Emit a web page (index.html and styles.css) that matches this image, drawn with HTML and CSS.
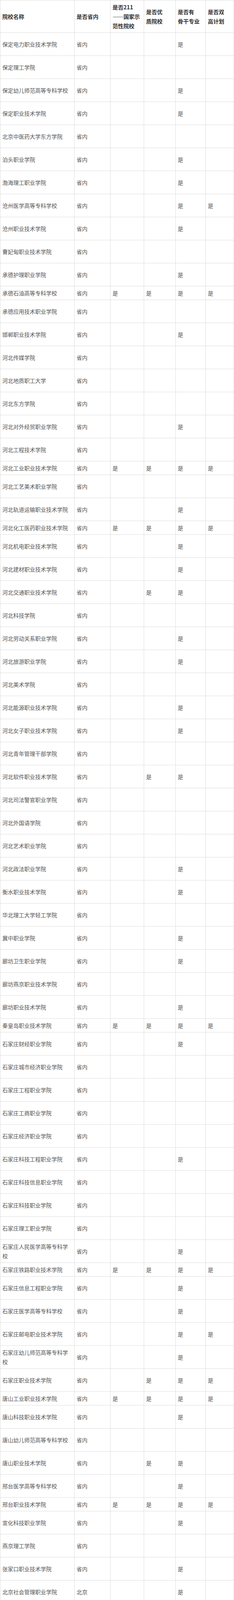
FILE: index.html
```html
<!DOCTYPE html>
<html lang="zh-CN">
<head>
<meta charset="utf-8">
<title>院校名单</title>
<link rel="stylesheet" href="styles.css">
</head>
<body>
<table class="schools">
<thead>
<tr><th class="c1">院校名称</th><th class="c2">是否省内</th><th class="c3">是否211<br>——国家示<br>范性院校</th><th class="c4">是否优<br>质院校</th><th class="c5">是否有<br>骨干专业</th><th class="c6">是否双<br>高计划</th></tr>
</thead>
<tbody>
<tr class="n"><td>保定电力职业技术学院</td><td>省内</td><td></td><td></td><td>是</td><td></td></tr>
<tr class="n"><td>保定理工学院</td><td>省内</td><td></td><td></td><td></td><td></td></tr>
<tr class="n"><td>保定幼儿师范高等专科学校</td><td>省内</td><td></td><td></td><td>是</td><td></td></tr>
<tr class="n"><td>保定职业技术学院</td><td>省内</td><td></td><td></td><td>是</td><td></td></tr>
<tr class="n"><td>北京中医药大学东方学院</td><td>省内</td><td></td><td></td><td></td><td></td></tr>
<tr class="n"><td>泊头职业学院</td><td>省内</td><td></td><td></td><td>是</td><td></td></tr>
<tr class="n"><td>渤海理工职业学院</td><td>省内</td><td></td><td></td><td>是</td><td></td></tr>
<tr class="n"><td>沧州医学高等专科学校</td><td>省内</td><td></td><td></td><td>是</td><td>是</td></tr>
<tr class="n"><td>沧州职业技术学院</td><td>省内</td><td></td><td></td><td>是</td><td></td></tr>
<tr class="n"><td>曹妃甸职业技术学院</td><td>省内</td><td></td><td></td><td></td><td></td></tr>
<tr class="n"><td>承德护理职业学院</td><td>省内</td><td></td><td></td><td>是</td><td></td></tr>
<tr><td>承德石油高等专科学校</td><td>省内</td><td>是</td><td>是</td><td>是</td><td>是</td></tr>
<tr class="n"><td>承德应用技术职业学院</td><td>省内</td><td></td><td></td><td></td><td></td></tr>
<tr class="n"><td>邯郸职业技术学院</td><td>省内</td><td></td><td></td><td>是</td><td></td></tr>
<tr class="n"><td>河北传媒学院</td><td>省内</td><td></td><td></td><td></td><td></td></tr>
<tr class="n"><td>河北地质职工大学</td><td>省内</td><td></td><td></td><td></td><td></td></tr>
<tr class="n"><td>河北东方学院</td><td>省内</td><td></td><td></td><td></td><td></td></tr>
<tr class="n"><td>河北对外经贸职业学院</td><td>省内</td><td></td><td></td><td>是</td><td></td></tr>
<tr class="n"><td>河北工程技术学院</td><td>省内</td><td></td><td></td><td></td><td></td></tr>
<tr><td>河北工业职业技术学院</td><td>省内</td><td>是</td><td>是</td><td>是</td><td>是</td></tr>
<tr class="n"><td>河北工艺美术职业学院</td><td>省内</td><td></td><td></td><td></td><td></td></tr>
<tr class="n"><td>河北轨道运输职业技术学院</td><td>省内</td><td></td><td></td><td>是</td><td></td></tr>
<tr><td>河北化工医药职业技术学院</td><td>省内</td><td>是</td><td>是</td><td>是</td><td>是</td></tr>
<tr class="n"><td>河北机电职业技术学院</td><td>省内</td><td></td><td></td><td>是</td><td></td></tr>
<tr class="n"><td>河北建材职业技术学院</td><td>省内</td><td></td><td></td><td>是</td><td></td></tr>
<tr class="n"><td>河北交通职业技术学院</td><td>省内</td><td></td><td>是</td><td>是</td><td></td></tr>
<tr class="n"><td>河北科技学院</td><td>省内</td><td></td><td></td><td></td><td></td></tr>
<tr class="n"><td>河北劳动关系职业学院</td><td>省内</td><td></td><td></td><td>是</td><td></td></tr>
<tr class="n"><td>河北旅游职业学院</td><td>省内</td><td></td><td></td><td>是</td><td></td></tr>
<tr class="n"><td>河北美术学院</td><td>省内</td><td></td><td></td><td></td><td></td></tr>
<tr class="n"><td>河北能源职业技术学院</td><td>省内</td><td></td><td></td><td>是</td><td></td></tr>
<tr class="n"><td>河北女子职业技术学院</td><td>省内</td><td></td><td></td><td>是</td><td></td></tr>
<tr class="n"><td>河北青年管理干部学院</td><td>省内</td><td></td><td></td><td></td><td></td></tr>
<tr class="n"><td>河北软件职业技术学院</td><td>省内</td><td></td><td>是</td><td>是</td><td></td></tr>
<tr class="n"><td>河北司法警官职业学院</td><td>省内</td><td></td><td></td><td></td><td></td></tr>
<tr class="n"><td>河北外国语学院</td><td>省内</td><td></td><td></td><td></td><td></td></tr>
<tr class="n"><td>河北艺术职业学院</td><td>省内</td><td></td><td></td><td></td><td></td></tr>
<tr class="n"><td>河北政法职业学院</td><td>省内</td><td></td><td></td><td>是</td><td></td></tr>
<tr class="n"><td>衡水职业技术学院</td><td>省内</td><td></td><td></td><td>是</td><td></td></tr>
<tr class="n"><td>华北理工大学轻工学院</td><td>省内</td><td></td><td></td><td></td><td></td></tr>
<tr class="n"><td>冀中职业学院</td><td>省内</td><td></td><td></td><td>是</td><td></td></tr>
<tr class="n"><td>廊坊卫生职业学院</td><td>省内</td><td></td><td></td><td>是</td><td></td></tr>
<tr class="n"><td>廊坊燕京职业技术学院</td><td>省内</td><td></td><td></td><td></td><td></td></tr>
<tr class="n"><td>廊坊职业技术学院</td><td>省内</td><td></td><td></td><td>是</td><td></td></tr>
<tr><td>秦皇岛职业技术学院</td><td>省内</td><td>是</td><td>是</td><td>是</td><td>是</td></tr>
<tr class="n"><td>石家庄财经职业学院</td><td>省内</td><td></td><td></td><td>是</td><td></td></tr>
<tr class="n"><td>石家庄城市经济职业学院</td><td>省内</td><td></td><td></td><td></td><td></td></tr>
<tr class="n"><td>石家庄工程职业学院</td><td>省内</td><td></td><td></td><td></td><td></td></tr>
<tr class="n"><td>石家庄工商职业学院</td><td>省内</td><td></td><td></td><td></td><td></td></tr>
<tr class="n"><td>石家庄经济职业学院</td><td>省内</td><td></td><td></td><td></td><td></td></tr>
<tr class="n"><td>石家庄科技工程职业学院</td><td>省内</td><td></td><td></td><td>是</td><td></td></tr>
<tr class="n"><td>石家庄科技信息职业学院</td><td>省内</td><td></td><td></td><td></td><td></td></tr>
<tr class="n"><td>石家庄科技职业学院</td><td>省内</td><td></td><td></td><td></td><td></td></tr>
<tr class="n"><td>石家庄理工职业学院</td><td>省内</td><td></td><td></td><td></td><td></td></tr>
<tr class="w"><td>石家庄人民医学高等专科学校</td><td>省内</td><td></td><td></td><td>是</td><td></td></tr>
<tr><td>石家庄铁路职业技术学院</td><td>省内</td><td>是</td><td>是</td><td>是</td><td>是</td></tr>
<tr class="n"><td>石家庄信息工程职业学院</td><td>省内</td><td></td><td></td><td>是</td><td></td></tr>
<tr class="n"><td>石家庄医学高等专科学校</td><td>省内</td><td></td><td></td><td>是</td><td></td></tr>
<tr class="n"><td>石家庄邮电职业技术学院</td><td>省内</td><td></td><td></td><td>是</td><td>是</td></tr>
<tr class="w"><td>石家庄幼儿师范高等专科学校</td><td>省内</td><td></td><td></td><td>是</td><td></td></tr>
<tr class="n"><td>石家庄职业技术学院</td><td>省内</td><td></td><td>是</td><td>是</td><td>是</td></tr>
<tr><td>唐山工业职业技术学院</td><td>省内</td><td>是</td><td>是</td><td>是</td><td>是</td></tr>
<tr class="n"><td>唐山科技职业技术学院</td><td>省内</td><td></td><td></td><td>是</td><td></td></tr>
<tr class="n"><td>唐山幼儿师范高等专科学校</td><td>省内</td><td></td><td></td><td></td><td></td></tr>
<tr class="n"><td>唐山职业技术学院</td><td>省内</td><td></td><td>是</td><td>是</td><td></td></tr>
<tr class="n"><td>邢台医学高等专科学校</td><td>省内</td><td></td><td></td><td>是</td><td></td></tr>
<tr><td>邢台职业技术学院</td><td>省内</td><td>是</td><td>是</td><td>是</td><td>是</td></tr>
<tr class="n"><td>宣化科技职业学院</td><td>省内</td><td></td><td></td><td>是</td><td></td></tr>
<tr class="n"><td>燕京理工学院</td><td>省内</td><td></td><td></td><td></td><td></td></tr>
<tr class="n"><td>张家口职业技术学院</td><td>省内</td><td></td><td></td><td>是</td><td></td></tr>
<tr class="n"><td>北京社会管理职业学院</td><td>北京</td><td></td><td></td><td>是</td><td></td></tr>
<tr><td>长沙民政职业技术学院</td><td>湖南</td><td>是</td><td>是</td><td>是</td><td>是</td></tr>
<tr><td>北京工业职业技术学院</td><td>北京</td><td>是</td><td>是</td><td>是</td><td>是</td></tr>
<tr><td>北京财贸职业学院</td><td>北京</td><td>是</td><td>是</td><td>是</td><td>是</td></tr>
<tr class="n"><td>北京汇佳职业学院</td><td>北京</td><td></td><td></td><td>是</td><td></td></tr>
<tr><td>天津轻工职业技术学院</td><td>天津</td><td>是</td><td>是</td><td>是</td><td>是</td></tr>
<tr class="n"><td>天津体育职业学院</td><td>天津</td><td></td><td></td><td></td><td></td></tr>
<tr class="tail"><td></td><td></td><td></td><td></td><td></td><td></td></tr>
</tbody>
</table>
</body>
</html>
```

FILE: styles.css
```css
html, body {
  margin: 0;
  padding: 0;
  background: #fff;
}

.schools {
  table-layout: fixed;
  width: 599px;
  border-collapse: separate;
  border-spacing: 0;
  border-top: 1px solid #ddd;
  border-left: 1px solid #ddd;
  font-family: "Noto Sans CJK SC", "Microsoft YaHei", sans-serif;
  font-size: 14px;
  line-height: 24px;
  color: #555;
}

.schools th,
.schools td {
  padding: 5px;
  border-right: 1px solid #ddd;
  border-bottom: 1px solid #ddd;
  text-align: left;
  vertical-align: middle;
  word-break: break-all;
}

.schools th {
  font-weight: bold;
  color: #333;
}

.schools .c1 { width: 179px; }
.schools .c2 { width: 81px; }
.schools .c3 { width: 75px; }
.schools .c4 { width: 70px; }
.schools .c5 { width: 66px; }
.schools .c6 { width: 61px; }

.schools tr.n td {
  padding-top: 17px;
  padding-bottom: 17px;
}

.schools tr.w td {
  padding-top: 5px;
  padding-bottom: 5px;
}

.schools tr.tail td {
  padding: 0;
  height: 14px;
  line-height: 0;
  border-bottom: 0;
}
```
